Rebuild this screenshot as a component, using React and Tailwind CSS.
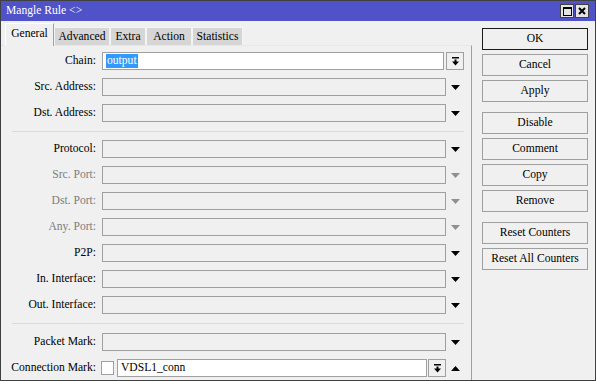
import React from 'react';

function Arrow({ up = false, gray = false }) {
    return (
        <svg width="9" height="5" viewBox="0 0 9 5" className="block">
            <path d={up ? 'M0 5 L9 5 L4.5 0 Z' : 'M0 0 L9 0 L4.5 5 Z'} fill={gray ? '#8a948a' : '#000'} />
        </svg>
    );
}

function DropButton() {
    return (
        <div className="w-[18px] h-[18px] border border-[#a0a0a0] bg-[#f0f0f0] flex items-center justify-center shrink-0">
            <svg width="9" height="9" viewBox="0 0 9 9" className="block">
                <rect x="1" y="0" width="7" height="1.5" fill="#000" />
                <rect x="3.5" y="2.5" width="2" height="2.5" fill="#000" />
                <path d="M1 4.5 L8 4.5 L4.5 8.5 Z" fill="#000" />
            </svg>
        </div>
    );
}

function Row({ label, disabled = false }) {
    return (
        <div className="flex items-center h-[18px] pr-[7px]">
            <div className={`w-[95px] shrink-0 text-right leading-none ${disabled ? 'text-[#7d7d7d]' : 'text-black'}`}>
                {label}
            </div>
            <div className="ml-[6px] flex-1 h-[18px] border border-[#a0a0a0] bg-[#f0f0f0]"></div>
            <div className="w-[18px] shrink-0 flex justify-center">
                <Arrow gray={disabled} />
            </div>
        </div>
    );
}

function Separator() {
    return <div className="ml-[11px] mr-[7px] h-px bg-[#dadada]"></div>;
}

function Btn({ children, primary = false, className = '' }) {
    return (
        <div
            className={`w-[106px] h-[22px] flex items-center justify-center leading-none bg-[#f0f0f0] border ${
                primary ? 'border-[#1a1a1a]' : 'border-[#a0a0a0]'
            } ${className}`}
        >
            {children}
        </div>
    );
}

const tabs = [
    { name: 'Advanced', w: 'w-[56px]' },
    { name: 'Extra', w: 'w-[36px]' },
    { name: 'Action', w: 'w-[46px]' },
    { name: 'Statistics', w: 'w-[51px]' },
];

export default function App() {
    return (
        <div className="w-[596px] h-[381px] border border-[#404040] bg-[#f0f0f0] flex flex-col overflow-hidden text-[11.6px] text-black [font-family:Liberation_Serif,serif]">
            {/* title bar */}
            <div className="h-[20px] shrink-0 bg-[#5052c8] flex items-center justify-between pl-[5px] pr-[6px]">
                <span className="text-white leading-none">Mangle Rule &lt;&gt;</span>
                <div className="flex">
                    <div className="w-[14px] h-[14px] bg-[#e4e4e4] border border-[#404040] flex items-center justify-center">
                        <div className="w-[9px] h-[9px] border border-black border-t-2"></div>
                    </div>
                    <div className="w-[14px] h-[14px] ml-[1px] bg-[#e4e4e4] border border-[#404040] flex items-center justify-center">
                        <svg width="8" height="8" viewBox="0 0 8 8" className="block">
                            <path d="M1 1 L7 7 M7 1 L1 7" stroke="#000" strokeWidth="2" />
                        </svg>
                    </div>
                </div>
            </div>

            <div className="flex-1 flex">
                {/* left: tabs + panel */}
                <div className="w-[471px] shrink-0 flex flex-col">
                    <div className="h-[24px] shrink-0 flex items-end pl-[4px] relative">
                        <div className="w-[49px] h-[23px] -mb-px relative z-10 bg-[#f0f0f0] border-l border-t border-white border-r-[#a0a0a0] border-r flex items-center justify-center leading-none pb-[2px]">
                            General
                        </div>
                        {tabs.map((t) => (
                            <div
                                key={t.name}
                                className={`${t.w} h-[18px] bg-[#d6d6d6] border-l border-t border-r border-[#f4f4f4] flex items-center justify-center leading-none`}
                            >
                                {t.name}
                            </div>
                        ))}
                    </div>

                    <div className="flex-1 border-t border-t-[#e8e8e8] border-r border-r-[#a0a0a0] pt-[6px]">
                        <div className="flex flex-col gap-[8px]">
                            <div className="flex items-center h-[18px] pr-[7px]">
                                <div className="w-[95px] shrink-0 text-right leading-none">Chain:</div>
                                <div className="ml-[6px] flex-1 h-[18px] border border-[#a0a0a0] bg-white flex items-center pl-[3px]">
                                    <span className="bg-[#3399ff] text-white leading-none px-px py-[1px]">output</span>
                                </div>
                                <div className="ml-[2px]">
                                    <DropButton />
                                </div>
                            </div>
                            <Row label="Src. Address:" />
                            <Row label="Dst. Address:" />
                        </div>

                        <div className="mt-[9px] mb-[8px]">
                            <Separator />
                        </div>

                        <div className="flex flex-col gap-[8px]">
                            <Row label="Protocol:" />
                            <Row label="Src. Port:" disabled />
                            <Row label="Dst. Port:" disabled />
                            <Row label="Any. Port:" disabled />
                            <Row label="P2P:" />
                            <Row label="In. Interface:" />
                            <Row label="Out. Interface:" />
                        </div>

                        <div className="mt-[9px] mb-[9px]">
                            <Separator />
                        </div>

                        <div className="flex flex-col gap-[8px]">
                            <Row label="Packet Mark:" />
                            <div className="flex items-center h-[18px] pr-[7px]">
                                <div className="w-[95px] shrink-0 text-right leading-none">Connection Mark:</div>
                                <div className="ml-[5px] w-[13px] h-[14px] shrink-0 border border-[#a0a0a0] bg-white"></div>
                                <div className="ml-[3px] flex-1 h-[18px] border border-[#a0a0a0] bg-white flex items-center pl-[3px] leading-none">
                                    VDSL1_conn
                                </div>
                                <div className="ml-[1px]">
                                    <DropButton />
                                </div>
                                <div className="w-[18px] shrink-0 flex justify-center">
                                    <Arrow up />
                                </div>
                            </div>
                        </div>
                    </div>
                </div>

                {/* right: buttons */}
                <div className="flex-1 pt-[7px] pl-[10px] flex flex-col gap-[4px]">
                    <Btn primary>OK</Btn>
                    <Btn>Cancel</Btn>
                    <Btn>Apply</Btn>
                    <Btn className="mt-[6px]">Disable</Btn>
                    <Btn>Comment</Btn>
                    <Btn>Copy</Btn>
                    <Btn>Remove</Btn>
                    <Btn className="mt-[6px]">Reset Counters</Btn>
                    <Btn>Reset All Counters</Btn>
                </div>
            </div>
        </div>
    );
}
